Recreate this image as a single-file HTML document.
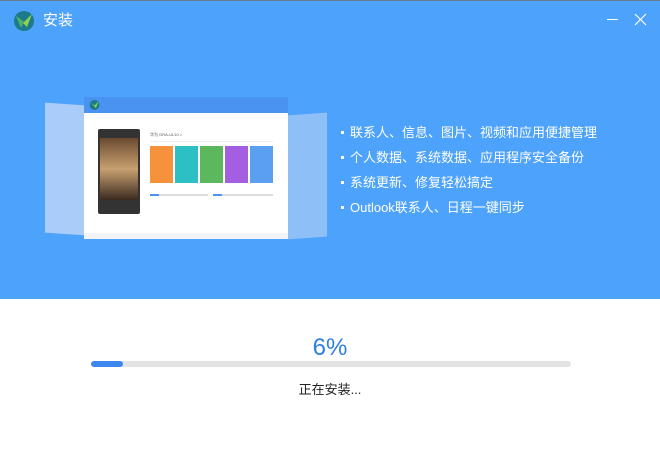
<!DOCTYPE html>
<html><head><meta charset="utf-8"><style>
*{margin:0;padding:0;box-sizing:border-box}
body{width:660px;height:455px;overflow:hidden;background:#fff;font-family:"Liberation Sans","Noto Sans CJK SC",sans-serif;position:relative}
.top{position:absolute;left:0;top:0;width:660px;height:299px;background:#4da2fb}
.abs{position:absolute}
.feat{position:absolute;left:341px;color:#fff;font-size:13px;line-height:25px;top:120px}
.feat div::before{content:"";display:inline-block;width:3px;height:3px;background:#fff;margin:0 6px 3px 0;vertical-align:middle}
</style></head><body>
<div class="top"></div>
<div class="abs" style="left:0;top:0;width:660px;height:1px;background:#6a7a8a"></div>
<!-- logo -->
<svg class="abs" style="left:13px;top:11px" width="22" height="20" viewBox="0 0 22 20">
<circle cx="11" cy="10" r="10" fill="#1d7a8a"/>
<path d="M3 5 L11 11 L19 3 L14 16 Z" fill="#8fd14f"/>
<path d="M3 5 L11 11 L8 17 Z" fill="#4bb36a"/>
</svg>
<div class="abs" style="left:43px;top:9px;color:#fff;font-size:15px">安装</div>
<div class="abs" style="left:607px;top:19px;width:11px;height:1px;background:#fff"></div>
<svg class="abs" style="left:634px;top:13px" width="13" height="13"><path d="M1 1L12 12M12 1L1 12" stroke="#fff" stroke-width="1.2"/></svg>
<!-- side faded panels -->
<div class="abs" style="left:45px;top:104px;width:40px;height:130px;background:#a9cdf8;transform:skewY(4deg)"></div>
<div class="abs" style="left:287px;top:114px;width:40px;height:124px;background:#8fbff7;transform:skewY(-4deg)"></div>
<!-- main window -->
<div class="abs" style="left:84px;top:97px;width:204px;height:142px;background:#fff">
 <div style="height:16px;background:#4a93f0"></div>
 <svg class="abs" style="left:5px;top:3px" width="11" height="10"><circle cx="5.5" cy="5" r="5" fill="#1d7a8a"/><path d="M1.5 2.5L5.5 5.5L9.5 1.5L7 8Z" fill="#8fd14f"/></svg>
 <div class="abs" style="left:14px;top:32px;width:42px;height:85px;background:#333;border-radius:2px"></div>
 <div class="abs" style="left:16px;top:41px;width:38px;height:62px;background:linear-gradient(#6a4a30,#c8a070 50%,#3a2a20)"></div>
 <div class="abs" style="left:66px;top:35px;font-size:4px;color:#555">华为 GRA-UL10 ></div>
 <div class="abs" style="left:66px;top:44px;width:123px;height:1px;background:#eee"></div>
 <div class="abs" style="left:66px;top:49px;width:23px;height:37px;background:#f7923c"></div>
 <div class="abs" style="left:91px;top:49px;width:23px;height:37px;background:#2cbfc4"></div>
 <div class="abs" style="left:116px;top:49px;width:23px;height:37px;background:#5cb85c"></div>
 <div class="abs" style="left:141px;top:49px;width:23px;height:37px;background:#a45ee0"></div>
 <div class="abs" style="left:166px;top:49px;width:23px;height:37px;background:#5a9ff0"></div>
 <div class="abs" style="left:66px;top:97px;width:58px;height:2px;background:#ddd"></div>
 <div class="abs" style="left:66px;top:97px;width:9px;height:2px;background:#4a93f0"></div>
 <div class="abs" style="left:129px;top:97px;width:60px;height:2px;background:#ddd"></div>
 <div class="abs" style="left:129px;top:97px;width:9px;height:2px;background:#4a93f0"></div>
 <div class="abs" style="left:0;top:136px;width:204px;height:6px;background:#f2f4f7"></div>
</div>
<div class="feat">
<div>联系人、信息、图片、视频和应用便捷管理</div>
<div>个人数据、系统数据、应用程序安全备份</div>
<div>系统更新、修复轻松搞定</div>
<div>Outlook联系人、日程一键同步</div>
</div>
<div class="abs" style="left:0;top:334px;width:660px;text-align:center;font-size:24px;color:#2b7fe0">6%</div>
<div class="abs" style="left:91px;top:361px;width:480px;height:6px;background:#e3e3e3;border-radius:3px"></div>
<div class="abs" style="left:91px;top:361px;width:32px;height:6px;background:#3d86ee;border-radius:3px"></div>
<div class="abs" style="left:0;top:379px;width:660px;text-align:center;font-size:13px;color:#222">正在安装...</div>
</body></html>
